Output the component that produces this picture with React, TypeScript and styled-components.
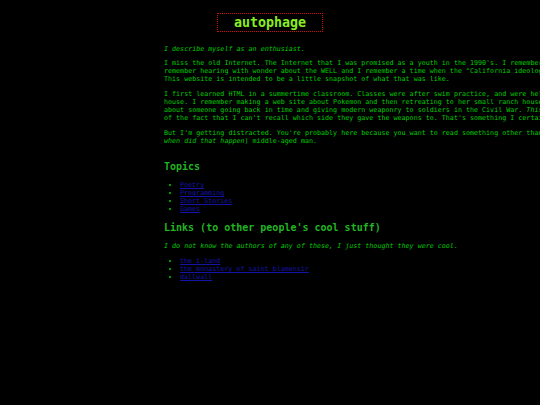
import styled, { createGlobalStyle } from "styled-components";

const GlobalStyle = createGlobalStyle`
  html, body {
    margin: 0;
    padding: 0;
    background: #000;
    overflow: hidden;
  }
  body {
    font-family: "DejaVu Sans Mono", "Liberation Mono", monospace;
    font-size: 6.7px;
    line-height: 8px;
    color: #00cc00;
  }
`;

const Page = styled.div`
  width: 540px;
  min-height: 405px;
  padding-top: 13px;
  box-sizing: border-box;
`;

const Header = styled.header`
  display: flex;
  justify-content: center;
`;

const Title = styled.h1`
  margin: 0;
  padding: 1px 16px 0;
  height: 16px;
  line-height: 16px;
  font-size: 13.33px;
  font-weight: bold;
  color: #88ee22;
  border: 1px dotted #cc1010;
`;

const Main = styled.main`
  margin-left: 164px;
  width: 480px;
  white-space: nowrap;
  padding-top: 13px;
`;

const Para = styled.p<{ $italic?: boolean; $gap?: number }>`
  margin: 0 0 ${(p) => p.$gap ?? 7}px;
  font-style: ${(p) => (p.$italic ? "italic" : "normal")};
`;

const Heading = styled.h2<{ $top: number }>`
  margin: ${(p) => p.$top}px 0 8px;
  font-size: 10px;
  line-height: 12px;
  font-weight: bold;
  color: #22b422;
`;

const List = styled.ul`
  margin: 0;
  padding-left: 16px;
  list-style: disc;
`;

const Item = styled.li`
  color: #00cc00;
`;

const Link = styled.a`
  color: #1414a8;
  text-decoration: underline;
`;

const topics = ["Poetry", "Programming", "Short Stories", "Games"];
const links = ["the i-land", "the monastery of saint blamensir", "dallwall"];

export default function App() {
  return (
    <Page>
      <GlobalStyle />
      <Header>
        <Title>autophage</Title>
      </Header>
      <Main>
        <Para $italic $gap={6}>I describe myself as an enthusiast.</Para>
        <Para>
          I miss the old Internet. The Internet that I was promised as a youth in the 1990's. I remember Usenet and IRC and I
          <br />
          remember hearing with wonder about the WELL and I remember a time when the "California ideology" was still new.
          <br />
          This website is intended to be a little snapshot of what that was like.
        </Para>
        <Para>
          I first learned HTML in a summertime classroom. Classes were after swim practice, and were held in a teacher's
          <br />
          house. I remember making a web site about Pokemon and then retreating to her small ranch house's living room
          <br />
          about someone going back in time and giving modern weaponry to soldiers in the Civil War. <em>This was not good,</em>
          <br />
          of the fact that I can't recall which side they gave the weapons to. That's something I certainly should know.
        </Para>
        <Para $gap={0}>
          But I'm getting distracted. You're probably here because you want to read something other than the thoughts of a (
          <br />
          <em>when did that happen</em>) middle-aged man.
        </Para>
        <Heading $top={16}>Topics</Heading>
        <List>
          {topics.map((t) => (
            <Item key={t}>
              <Link href="#">{t}</Link>
            </Item>
          ))}
        </List>
        <Heading $top={9}>Links (to other people's cool stuff)</Heading>
        <Para $italic $gap={7}>
          I do not know the authors of any of these, I just thought they were cool.
        </Para>
        <List>
          {links.map((t) => (
            <Item key={t}>
              <Link href="#">{t}</Link>
            </Item>
          ))}
        </List>
      </Main>
    </Page>
  );
}
